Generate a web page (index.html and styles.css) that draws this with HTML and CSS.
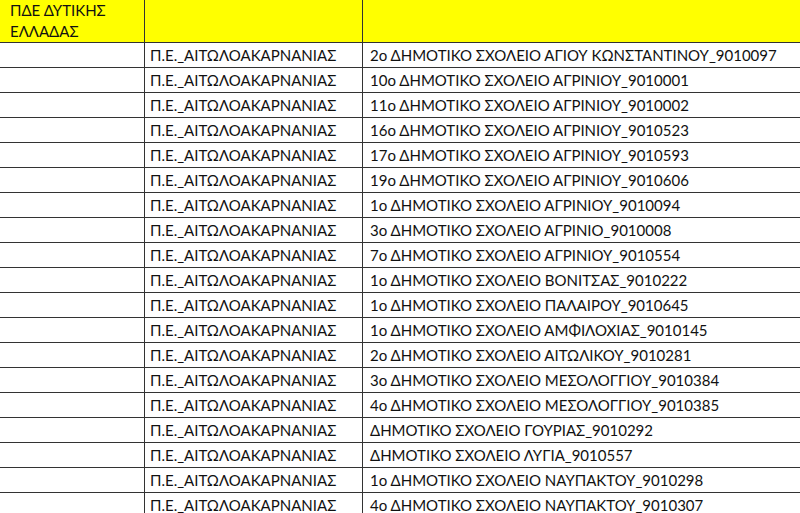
FILE: index.html
```html
<!DOCTYPE html>
<html lang="el">
<head>
    <meta charset="UTF-8">
    <meta name="viewport" content="width=device-width, initial-scale=1.0">
    <title>ΠΔΕ ΔΥΤΙΚΗΣ ΕΛΛΑΔΑΣ</title>
    <link rel="stylesheet" href="styles.css">
</head>
<body>
    <table class="sheet">
        <colgroup>
            <col class="col-region">
            <col class="col-office">
            <col class="col-school">
        </colgroup>
        <thead>
            <tr class="head-row">
                <th>ΠΔΕ ΔΥΤΙΚΗΣ<br>ΕΛΛΑΔΑΣ</th>
                <th></th>
                <th></th>
            </tr>
        </thead>
        <tbody>
            <tr><td></td><td class="office">Π.Ε._ΑΙΤΩΛΟΑΚΑΡΝΑΝΙΑΣ</td><td class="school">2ο ΔΗΜΟΤΙΚΟ ΣΧΟΛΕΙΟ ΑΓΙΟΥ ΚΩΝΣΤΑΝΤΙΝΟΥ_9010097</td></tr>
            <tr><td></td><td class="office">Π.Ε._ΑΙΤΩΛΟΑΚΑΡΝΑΝΙΑΣ</td><td class="school">10ο ΔΗΜΟΤΙΚΟ ΣΧΟΛΕΙΟ ΑΓΡΙΝΙΟΥ_9010001</td></tr>
            <tr><td></td><td class="office">Π.Ε._ΑΙΤΩΛΟΑΚΑΡΝΑΝΙΑΣ</td><td class="school">11ο ΔΗΜΟΤΙΚΟ ΣΧΟΛΕΙΟ ΑΓΡΙΝΙΟΥ_9010002</td></tr>
            <tr><td></td><td class="office">Π.Ε._ΑΙΤΩΛΟΑΚΑΡΝΑΝΙΑΣ</td><td class="school">16ο ΔΗΜΟΤΙΚΟ ΣΧΟΛΕΙΟ ΑΓΡΙΝΙΟΥ_9010523</td></tr>
            <tr><td></td><td class="office">Π.Ε._ΑΙΤΩΛΟΑΚΑΡΝΑΝΙΑΣ</td><td class="school">17ο ΔΗΜΟΤΙΚΟ ΣΧΟΛΕΙΟ ΑΓΡΙΝΙΟΥ_9010593</td></tr>
            <tr><td></td><td class="office">Π.Ε._ΑΙΤΩΛΟΑΚΑΡΝΑΝΙΑΣ</td><td class="school">19ο ΔΗΜΟΤΙΚΟ ΣΧΟΛΕΙΟ ΑΓΡΙΝΙΟΥ_9010606</td></tr>
            <tr><td></td><td class="office">Π.Ε._ΑΙΤΩΛΟΑΚΑΡΝΑΝΙΑΣ</td><td class="school">1ο ΔΗΜΟΤΙΚΟ ΣΧΟΛΕΙΟ ΑΓΡΙΝΙΟΥ_9010094</td></tr>
            <tr><td></td><td class="office">Π.Ε._ΑΙΤΩΛΟΑΚΑΡΝΑΝΙΑΣ</td><td class="school">3ο ΔΗΜΟΤΙΚΟ ΣΧΟΛΕΙΟ ΑΓΡΙΝΙΟ_9010008</td></tr>
            <tr><td></td><td class="office">Π.Ε._ΑΙΤΩΛΟΑΚΑΡΝΑΝΙΑΣ</td><td class="school">7ο ΔΗΜΟΤΙΚΟ ΣΧΟΛΕΙΟ ΑΓΡΙΝΙΟΥ_9010554</td></tr>
            <tr><td></td><td class="office">Π.Ε._ΑΙΤΩΛΟΑΚΑΡΝΑΝΙΑΣ</td><td class="school">1ο ΔΗΜΟΤΙΚΟ ΣΧΟΛΕΙΟ ΒΟΝΙΤΣΑΣ_9010222</td></tr>
            <tr><td></td><td class="office">Π.Ε._ΑΙΤΩΛΟΑΚΑΡΝΑΝΙΑΣ</td><td class="school">1ο ΔΗΜΟΤΙΚΟ ΣΧΟΛΕΙΟ ΠΑΛΑΙΡΟΥ_9010645</td></tr>
            <tr><td></td><td class="office">Π.Ε._ΑΙΤΩΛΟΑΚΑΡΝΑΝΙΑΣ</td><td class="school">1ο ΔΗΜΟΤΙΚΟ ΣΧΟΛΕΙΟ ΑΜΦΙΛΟΧΙΑΣ_9010145</td></tr>
            <tr><td></td><td class="office">Π.Ε._ΑΙΤΩΛΟΑΚΑΡΝΑΝΙΑΣ</td><td class="school">2ο ΔΗΜΟΤΙΚΟ ΣΧΟΛΕΙΟ ΑΙΤΩΛΙΚΟΥ_9010281</td></tr>
            <tr><td></td><td class="office">Π.Ε._ΑΙΤΩΛΟΑΚΑΡΝΑΝΙΑΣ</td><td class="school">3ο ΔΗΜΟΤΙΚΟ ΣΧΟΛΕΙΟ ΜΕΣΟΛΟΓΓΙΟΥ_9010384</td></tr>
            <tr><td></td><td class="office">Π.Ε._ΑΙΤΩΛΟΑΚΑΡΝΑΝΙΑΣ</td><td class="school">4ο ΔΗΜΟΤΙΚΟ ΣΧΟΛΕΙΟ ΜΕΣΟΛΟΓΓΙΟΥ_9010385</td></tr>
            <tr><td></td><td class="office">Π.Ε._ΑΙΤΩΛΟΑΚΑΡΝΑΝΙΑΣ</td><td class="school">ΔΗΜΟΤΙΚΟ ΣΧΟΛΕΙΟ ΓΟΥΡΙΑΣ_9010292</td></tr>
            <tr><td></td><td class="office">Π.Ε._ΑΙΤΩΛΟΑΚΑΡΝΑΝΙΑΣ</td><td class="school">ΔΗΜΟΤΙΚΟ ΣΧΟΛΕΙΟ ΛΥΓΙΑ_9010557</td></tr>
            <tr><td></td><td class="office">Π.Ε._ΑΙΤΩΛΟΑΚΑΡΝΑΝΙΑΣ</td><td class="school">1ο ΔΗΜΟΤΙΚΟ ΣΧΟΛΕΙΟ ΝΑΥΠΑΚΤΟΥ_9010298</td></tr>
            <tr><td></td><td class="office">Π.Ε._ΑΙΤΩΛΟΑΚΑΡΝΑΝΙΑΣ</td><td class="school">4ο ΔΗΜΟΤΙΚΟ ΣΧΟΛΕΙΟ ΝΑΥΠΑΚΤΟΥ_9010307</td></tr>
        </tbody>
    </table>
</body>
</html>
```
FILE: styles.css
```css
body { margin: 0; overflow: hidden; background: #fff; font-family: Lato, "Liberation Sans", sans-serif; font-size: 15px; color: #111; }
.sheet { border-collapse: separate; border-spacing: 0; table-layout: fixed; width: 100%; }
.col-region { width: 145px; }
.col-office { width: 218px; }
th, td { padding: 0; border-right: 1px solid #333; border-bottom: 1px solid #333; text-align: left; font-weight: normal; white-space: nowrap; overflow: hidden; }
th:last-child, td:last-child { border-right: none; }
.head-row th { background: #ffff00; height: 42px; line-height: 21px; vertical-align: top; padding-left: 10px; }
td { height: 24px; line-height: 24px; }
.office { padding-left: 5px; }
.school { padding-left: 7px; }
```
